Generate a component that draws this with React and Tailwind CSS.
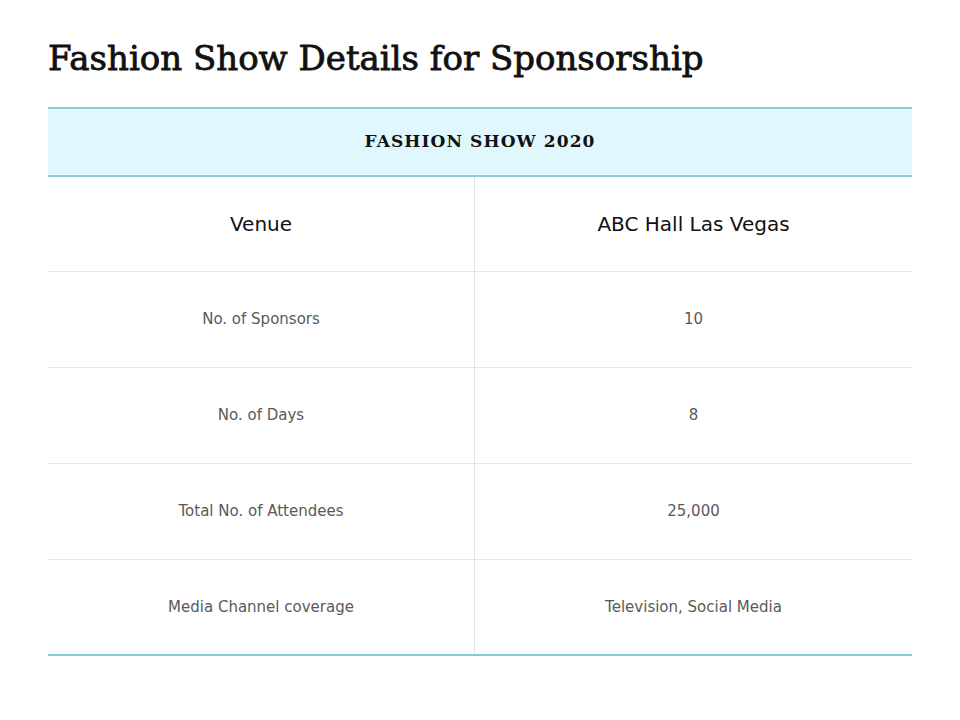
const rows = [
  { label: "No. of Sponsors", value: "10" },
  { label: "No. of Days", value: "8" },
  { label: "Total No. of Attendees", value: "25,000" },
  { label: "Media Channel coverage", value: "Television, Social Media" },
];

export default function App() {
  return (
    <div className="w-[960px] h-[720px] bg-white px-12 pt-[35px]">
      <h1 className="font-['DejaVu_Serif',serif] text-[34px] leading-[47px] text-[#111] [-webkit-text-stroke:0.8px_#111]">
        Fashion Show Details for Sponsorship
      </h1>

      <div className="mt-[25px] font-['DejaVu_Sans',sans-serif]">
        {/* header */}
        <div className="h-[70px] flex items-center justify-center bg-[#e0f7fd] border-y-2 border-[#8fcbd8]">
          <span className="font-['DejaVu_Serif',serif] font-bold text-[17px] tracking-[1.1px] text-[#111]">FASHION SHOW 2020</span>
        </div>

        <div className="grid grid-cols-[427px_1fr] h-[95px] border-b border-[#e6e6e6]">
          <div className="flex items-center justify-center border-r border-[#e2e2e2] text-[20px] text-[#111]">Venue</div>
          <div className="flex items-center justify-center text-[20px] text-[#111]">ABC Hall Las Vegas</div>
        </div>

        {rows.map((row, i) => (
          <div
            key={i}
            className={
              i === rows.length - 1
                ? "grid grid-cols-[427px_1fr] h-[96px] border-b-2 border-[#86c8dc]"
                : "grid grid-cols-[427px_1fr] h-[96px] border-b border-[#e6e6e6]"
            }
          >
            <div className="flex items-center justify-center border-r border-[#e2e2e2] text-[15px] text-[#5a5a5a]">{row.label}</div>
            <div className="flex items-center justify-center text-[15px] text-[#5a5a5a]">{row.value}</div>
          </div>
        ))}
      </div>
    </div>
  );
}
